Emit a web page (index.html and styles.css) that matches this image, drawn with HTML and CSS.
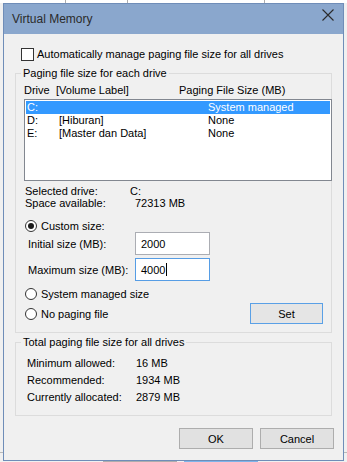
FILE: index.html
```html
<!DOCTYPE html>
<html>
<head>
<meta charset="utf-8">
<title>Virtual Memory</title>
<link rel="stylesheet" href="styles.css">
</head>
<body>
<div class="bgwin">
  <div class="tabs">
    <span class="tab t1"><span class="tabtext">Visual Effects</span></span>
    <span class="tab t2"><span class="tabtext">Advanced</span></span>
    <span class="tab t3"><span class="tabtext">Data Execution Prevention</span></span>
  </div>
  <div class="page"></div>
  <div class="bgbtns">
    <span class="bgbtn b1"></span>
    <span class="bgbtn b2"></span>
  </div>
</div>

<div class="dialog">
  <div class="titlebar">
    <span class="title">Virtual Memory</span>
    <svg class="close" width="12" height="12" viewBox="0 0 12 12"><path d="M0.5 0.5 L11.5 11.5 M11.5 0.5 L0.5 11.5" stroke="#2b2b2b" stroke-width="1.1" fill="none"/></svg>
  </div>
  <div class="content">
    <div class="auto-row">
      <span class="checkbox"></span>
      <span class="auto-label">Automatically manage paging file size for all drives</span>
    </div>

    <fieldset class="group g1">
      <legend>Paging file size for each drive</legend>
      <div class="hdr">
        <span class="h-drive">Drive</span>
        <span class="h-label">[Volume Label]</span>
        <span class="h-size">Paging File Size (MB)</span>
      </div>
      <div class="listbox">
        <div class="lrow sel"><span class="c-drive">C:</span><span class="c-label"></span><span class="c-size">System managed</span></div>
        <div class="lrow"><span class="c-drive">D:</span><span class="c-label">[Hiburan]</span><span class="c-size">None</span></div>
        <div class="lrow"><span class="c-drive">E:</span><span class="c-label">[Master dan Data]</span><span class="c-size">None</span></div>
      </div>
      <div class="info">
        <div class="irow"><span class="ilabel">Selected drive:</span><span class="ival">C:</span></div>
        <div class="irow"><span class="ilabel">Space available:</span><span class="ival ival2">72313 MB</span></div>
      </div>
      <div class="radio-row custom">
        <span class="radio on"></span><span class="rlabel">Custom size:</span>
      </div>
      <div class="field-row first">
        <span class="flabel">Initial size (MB):</span>
        <span class="textbox">2000</span>
      </div>
      <div class="field-row second">
        <span class="flabel">Maximum size (MB):</span>
        <span class="textbox focus">4000<span class="caret"></span></span>
      </div>
      <div class="radio-row sysman">
        <span class="radio"></span><span class="rlabel">System managed size</span>
      </div>
      <div class="radio-row nopage">
        <span class="radio"></span><span class="rlabel">No paging file</span>
        <span class="btn set">Set</span>
      </div>
    </fieldset>

    <fieldset class="group g2">
      <legend>Total paging file size for all drives</legend>
      <div class="trow first"><span class="tlabel">Minimum allowed:</span><span>16 MB</span></div>
      <div class="trow"><span class="tlabel">Recommended:</span><span>1934 MB</span></div>
      <div class="trow"><span class="tlabel">Currently allocated:</span><span>2879 MB</span></div>
    </fieldset>

    <div class="actions">
      <span class="btn">OK</span>
      <span class="btn">Cancel</span>
    </div>
  </div>
</div>
</body>
</html>
```
FILE: styles.css
```css
* { box-sizing: border-box; }
html, body { margin: 0; padding: 0; }
body {
  width: 347px;
  height: 462px;
  overflow: hidden;
  position: relative;
  background: #f0f0f0;
  font-family: "Liberation Sans", Arial, sans-serif;
  font-size: 11px;
  color: #000;
}

/* background window */
.bgwin { width: 347px; }
.tabs {
  height: 3px;
  overflow: hidden;
  display: flex;
  background: #fff;
}
.tab {
  height: 3px;
  overflow: hidden;
  white-space: nowrap;
  font-size: 12px;
  color: #000;
}
.tabtext {
  display: block;
  line-height: 12px;
  margin-top: -10px;
}
.t1 { width: 66px; border-right: 1px solid #adadad; }
.t1 .tabtext { margin-left: -24px; }
.t2 { width: 62px; border-right: 1px solid #adadad; padding-left: 9px; }
.t3 { width: 137px; border-right: 1px solid #adadad; padding-left: 4px; }
.page {
  height: 450px;
  border-bottom: 1px solid #b9b9b9;
}
.bgbtns {
  display: flex;
  margin-top: 8px;
  padding-left: 103px;
  gap: 7px;
}
.bgbtn { height: 4px; width: 74px; border: 1px solid #adadad; background: #e1e1e1; }
.bgbtn.b2 { border-color: #7eb4ea; background: #e5f1fb; }

/* dialog window */
.dialog {
  position: absolute;
  left: 3px;
  top: 3px;
  width: 341px;
  height: 458px;
  border: 1px solid #6f8db8;
  background: #f0f0f0;
  display: flex;
  flex-direction: column;
}
.titlebar {
  height: 30px;
  background: #8aa7cd;
  display: flex;
  align-items: center;
  padding-left: 8px;
}
.title {
  font-size: 12px;
  color: #2b2b2b;
  flex: 1;
}
.close {
  align-self: flex-start;
  margin-top: 5px;
  margin-right: 9px;
}
.content {
  padding: 13px 0 0 11px;
}

.auto-row {
  height: 15px;
  display: flex;
  align-items: center;
  padding-left: 6px;
}
.checkbox {
  width: 13px;
  height: 13px;
  border: 1px solid #333;
  background: #fff;
}
.auto-label { margin-left: 3px; line-height: 15px; }

.group {
  margin: 0;
  padding: 0;
  border: 1px solid #dcdcdc;
  min-width: 0;
  width: 317px;
}
.group legend {
  padding: 0 2px;
  margin-left: 5px;
  line-height: 15px;
  height: 15px;
}
.g1 { margin-top: 4px; padding-bottom: 8px; }

.hdr {
  display: flex;
  margin-top: 2px;
  padding-left: 8px;
  line-height: 15px;
  height: 15px;
  white-space: nowrap;
}
.h-drive { width: 32px; }
.h-label { width: 123px; }

.listbox {
  margin-top: 1px;
  margin-left: 8px;
  width: 308px;
  height: 82px;
  border: 1px solid #828790;
  background: #fff;
  padding: 1px;
  position: relative;
}
.lrow {
  display: flex;
  height: 13px;
  line-height: 13px;
  padding-left: 1px;
  white-space: nowrap;
}
.lrow.sel { background: #3399ff; color: #fff; }
.c-drive { width: 32px; }
.c-label { width: 149px; }

.info { margin-top: 4px; padding-left: 9px; }
.irow { display: flex; height: 12px; line-height: 12px; white-space: nowrap; }
.ilabel { width: 105px; }
.ival2 { margin-left: 5px; }

.radio-row {
  display: flex;
  align-items: center;
  padding-left: 9px;
  height: 12px;
  line-height: 12px;
}
.radio {
  width: 12px;
  height: 12px;
  border: 1px solid #333;
  border-radius: 50%;
  background: #fff;
  display: flex;
  align-items: center;
  justify-content: center;
}
.radio.on::after {
  content: "";
  width: 6px;
  height: 6px;
  border-radius: 50%;
  background: #1a1a1a;
}
.rlabel { margin-left: 4px; }
.custom { margin-top: 11px; }
.sysman { margin-top: 7px; }
.nopage { margin-top: 3px; height: 21px; }

.field-row {
  display: flex;
  align-items: center;
  height: 23px;
  padding-left: 12px;
}
.field-row.second { margin-top: 3px; }
.flabel { width: 107px; }
.textbox {
  width: 75px;
  height: 23px;
  border: 1px solid #abadb3;
  background: #fff;
  padding-left: 5px;
  display: flex;
  align-items: center;
}
.textbox.focus { border-color: #569de5; }
.caret { width: 1px; height: 13px; background: #000; margin-left: 1px; }

.btn {
  width: 74px;
  height: 21px;
  border: 1px solid #adadad;
  background: #e1e1e1;
  display: flex;
  align-items: center;
  justify-content: center;
}
.btn.set {
  width: 73px;
  margin-left: auto;
  margin-right: 8px;
  border-color: #5aa0e6;
  background: #e5e5e5;
}

.g2 { margin-top: 2px; padding-bottom: 9px; }
.trow { display: flex; height: 17px; line-height: 17px; padding-left: 11px; white-space: nowrap; }
.trow.first { margin-top: 5px; }
.tlabel { width: 109px; }

.actions {
  display: flex;
  justify-content: flex-end;
  gap: 7px;
  margin-top: 12px;
  padding-right: 9px;
}
```
